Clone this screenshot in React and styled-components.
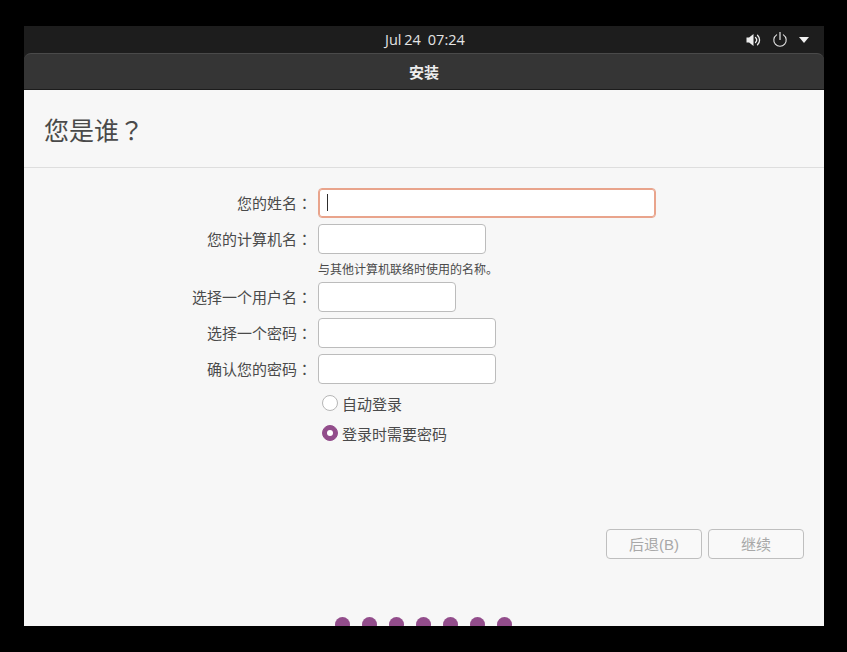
import React from "react";
import styled, { createGlobalStyle } from "styled-components";

const GlobalStyle = createGlobalStyle`
  html, body {
    margin: 0;
    padding: 0;
    background: #000;
  }
  * {
    box-sizing: border-box;
  }
`;

const FONT = `"Liberation Sans", "Noto Sans CJK SC", sans-serif`;

const Page = styled.div`
  width: 847px;
  height: 652px;
  padding: 26px 23px 26px 24px;
  background: #000;
  font-family: ${FONT};
`;

const Screen = styled.div`
  width: 800px;
  height: 600px;
  display: flex;
  flex-direction: column;
  overflow: hidden;
  background: #1e1e1e;
`;

// gnome top bar
const TopBar = styled.div`
  height: 27px;
  flex: none;
  display: flex;
  align-items: center;
  justify-content: flex-end;
  position: relative;
  padding-right: 15px;
  background: #1d1d1d;
`;

const Clock = styled.div`
  position: absolute;
  left: 361px;
  top: 4px;
  display: flex;
  gap: 7px;
  color: #e4e4e4;
  font-family: "Open Sans", sans-serif;
  font-size: 14.5px;
  line-height: 20px;
  word-spacing: -1px;
`;

const Tray = styled.div`
  display: flex;
  align-items: center;
  gap: 11px;
`;

const Window = styled.div`
  flex: 1;
  min-height: 0;
  display: flex;
  flex-direction: column;
`;

const TitleBar = styled.div`
  height: 37px;
  flex: none;
  display: flex;
  align-items: center;
  justify-content: center;
  padding-bottom: 1px;
  background: #353535;
  border-top: 1px solid #4a4a4a;
  border-bottom: 1px solid #1c1c1c;
  border-radius: 7px 7px 0 0;
  color: #eeeeee;
  font-size: 15px;
  font-weight: 700;
`;

const Content = styled.div`
  flex: 1;
  min-height: 0;
  display: flex;
  flex-direction: column;
  overflow: hidden;
  background: #f7f7f7;
  color: #3d3d3d;
`;

const Header = styled.div`
  height: 78px;
  flex: none;
  display: flex;
  align-items: center;
  padding: 0 0 0 20px;
  border-bottom: 1px solid #dedede;
  font-size: 25px;
  color: #4a4a4a;
`;

// full width punctuation sits in the middle of its cell in the reference
const Punct = styled.span`
  font-family: "Noto Sans CJK TC", sans-serif;
`;

const Form = styled.div`
  display: grid;
  grid-template-columns: 288px 1fr;
  column-gap: 6px;
  padding-top: 20px;
`;

const Label = styled.div`
  height: 30px;
  display: flex;
  align-items: center;
  justify-content: flex-end;
  padding-bottom: 2px;
  margin-top: ${(p) => p.$top || 0}px;
  font-size: 15px;
  color: #4a4a4a;
  white-space: nowrap;
`;

const Field = styled.div`
  width: ${(p) => p.$width}px;
  height: 30px;
  display: flex;
  align-items: center;
  margin-top: ${(p) => p.$top || 0}px;
  padding-left: 8px;
  background: #ffffff;
  border: 1px solid ${(p) => (p.$focused ? "#e9a48c" : "#bcbcbc")};
  border-radius: 4px;
  box-shadow: ${(p) => (p.$focused ? "inset 0 0 0 1px #e9a48c" : "none")};
`;

const Caret = styled.span`
  width: 1px;
  height: 17px;
  margin-top: -2px;
  background: #2d2d2d;
`;

const Hint = styled.div`
  grid-column: 2;
  height: 28px;
  display: flex;
  align-items: center;
  font-size: 12px;
  color: #4a4a4a;
`;

const RadioRow = styled.div`
  grid-column: 2;
  height: 30px;
  display: flex;
  align-items: center;
  gap: 4px;
  padding-left: 4px;
  font-size: 15px;
  color: #4a4a4a;
  margin-top: ${(p) => p.$top || 0}px;
`;

const Radio = styled.span`
  width: 16px;
  height: 16px;
  flex: none;
  display: flex;
  align-items: center;
  justify-content: center;
  border-radius: 50%;
  background: ${(p) => (p.$checked ? "#924d8b" : "#ffffff")};
  border: 1px solid ${(p) => (p.$checked ? "#924d8b" : "#b6b6b6")};
  &::after {
    content: "";
    display: ${(p) => (p.$checked ? "block" : "none")};
    width: 6px;
    height: 6px;
    border-radius: 50%;
    background: #ffffff;
  }
`;

const Actions = styled.div`
  display: flex;
  justify-content: flex-end;
  gap: 6px;
  margin-top: 81px;
  padding-right: 20px;
`;

const Button = styled.div`
  width: 96px;
  height: 30px;
  display: flex;
  align-items: center;
  justify-content: center;
  padding-bottom: 2px;
  background: #f9f9f9;
  border: 1px solid #bfbfbf;
  border-radius: 4px;
  color: #a8a8a8;
  font-size: 15px;
`;

const Dots = styled.div`
  display: flex;
  justify-content: center;
  gap: 12px;
  margin-top: 58px;
  padding-right: 2px;
`;

const Dot = styled.span`
  width: 15px;
  height: 15px;
  flex: none;
  border-radius: 50%;
  background: #924d8b;
`;

const VolumeIcon = () => (
  <svg width="16" height="16" viewBox="0 0 16 16" fill="none">
    <path d="M1.5 5.5h2.6L8.5 2v12L4.1 10.5H1.5z" fill="#ececec" />
    <path d="M10.5 5.5a3.6 3.6 0 0 1 0 5" stroke="#ececec" strokeWidth="1.3" strokeLinecap="round" />
    <path d="M12.5 3.2a6.6 6.6 0 0 1 0 9.6" stroke="#ececec" strokeWidth="1.3" strokeLinecap="round" />
  </svg>
);

const PowerIcon = () => (
  <svg width="16" height="16" viewBox="0 0.5 16 16" fill="none">
    <path d="M4.6 3.4a6.2 6.2 0 1 0 6.8 0" stroke="#e6e6e6" strokeWidth="1.1" strokeLinecap="round" />
    <path d="M8 1v7" stroke="#e6e6e6" strokeWidth="1.2" strokeLinecap="round" />
  </svg>
);

const ArrowIcon = () => (
  <svg width="10" height="6" viewBox="0 0 10 6">
    <path d="M0 0h10L5 6z" fill="#f0f0f0" />
  </svg>
);

export default function App() {
  return (
    <>
      <GlobalStyle />
      <Page>
        <Screen>
          <TopBar>
            <Clock>
              <span>Jul 24</span>
              <span>07:24</span>
            </Clock>
            <Tray>
              <VolumeIcon />
              <PowerIcon />
              <ArrowIcon />
            </Tray>
          </TopBar>
          <Window>
            <TitleBar>安装</TitleBar>
            <Content>
              <Header>
                您是谁<Punct>？</Punct>
              </Header>
              <Form>
                <Label>
                  您的姓名<Punct>：</Punct>
                </Label>
                <Field $width={338} $focused>
                  <Caret />
                </Field>
                <Label $top={6}>
                  您的计算机名<Punct>：</Punct>
                </Label>
                <Field $width={168} $top={6} />
                <Hint>与其他计算机联络时使用的名称。</Hint>
                <Label>
                  选择一个用户名<Punct>：</Punct>
                </Label>
                <Field $width={138} />
                <Label $top={6}>
                  选择一个密码<Punct>：</Punct>
                </Label>
                <Field $width={178} $top={6} />
                <Label $top={6}>
                  确认您的密码<Punct>：</Punct>
                </Label>
                <Field $width={178} $top={6} />
                <RadioRow $top={4}>
                  <Radio />
                  自动登录
                </RadioRow>
                <RadioRow>
                  <Radio $checked />
                  登录时需要密码
                </RadioRow>
              </Form>
              <Actions>
                <Button>后退(B)</Button>
                <Button>继续</Button>
              </Actions>
              <Dots>
                {[0, 1, 2, 3, 4, 5, 6].map((i) => (
                  <Dot key={i} />
                ))}
              </Dots>
            </Content>
          </Window>
        </Screen>
      </Page>
    </>
  );
}
